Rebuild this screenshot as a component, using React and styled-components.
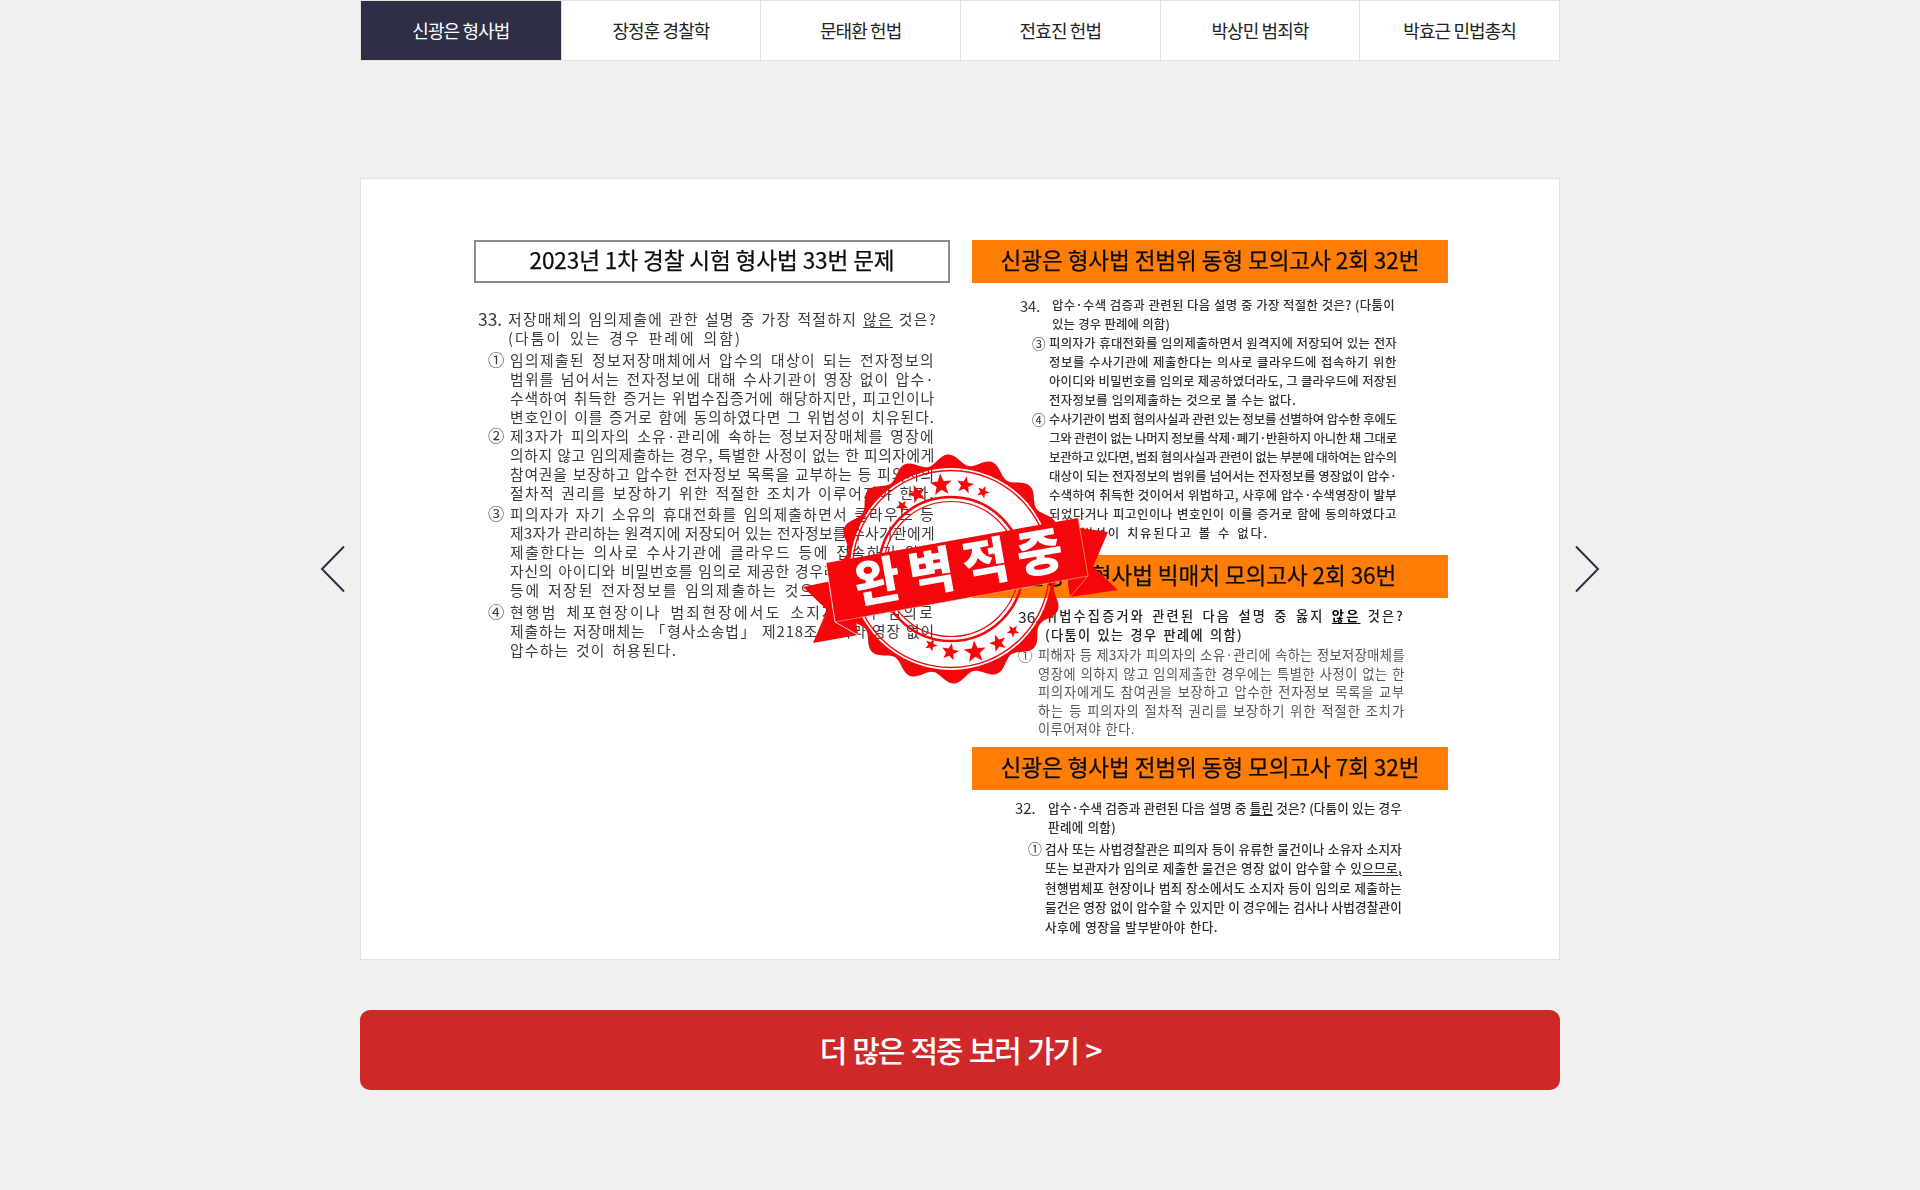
import React, { useLayoutEffect, useRef } from 'react';
import styled, { createGlobalStyle } from 'styled-components';

const KR = `'Noto Sans CJK KR', 'Noto Sans', sans-serif`;

const tabs = ['신광은 형사법', '장정훈 경찰학', '문태환 헌법', '전효진 헌법', '박상민 범죄학', '박효근 민법총칙'];

const U = styled.span`
  text-decoration: underline;
  text-underline-offset: 2px;
  font-weight: ${({ $bold }) => ($bold ? 700 : 'inherit')};
  color: ${({ $bold }) => ($bold ? '#000' : 'inherit')};
`;

const leftExam = {
  title: '2023년 1차 경찰 시험 형사법 33번 문제',
  outlined: true,
  size: 14.8,
  questionWeight: 400,
  line: 19,
  top: 25.5,
  color: '#3a3a3a',
  q: { left: 4, right: 13, numW: 30 },
  item: { left: 14, right: 15, markW: 22 },
  num: '33.',
  question: [
    <>저장매체의 임의제출에 관한 설명 중 가장 적절하지 <U>않은</U> 것은?</>,
    '(다툼이 있는 경우 판례에 의함)',
  ],
  questionEnd: 234,
  items: [
    {
      mark: '①',
      top: 3,
      lines: [
        '임의제출된 정보저장매체에서 압수의 대상이 되는 전자정보의',
        '범위를 넘어서는 전자정보에 대해 수사기관이 영장 없이 압수·',
        '수색하여 취득한 증거는 위법수집증거에 해당하지만, 피고인이나',
        '변호인이 이를 증거로 함에 동의하였다면 그 위법성이 치유된다.',
      ],
    },
    {
      mark: '②',
      top: 0.5,
      lines: [
        '제3자가 피의자의 소유·관리에 속하는 정보저장매체를 영장에',
        '의하지 않고 임의제출하는 경우, 특별한 사정이 없는 한 피의자에게',
        '참여권을 보장하고 압수한 전자정보 목록을 교부하는 등 피의자의',
        '절차적 권리를 보장하기 위한 적절한 조치가 이루어져야 한다.',
      ],
    },
    {
      mark: '③',
      top: 1.5,
      lines: [
        '피의자가 자기 소유의 휴대전화를 임의제출하면서 클라우드 등',
        '제3자가 관리하는 원격지에 저장되어 있는 전자정보를 수사기관에게',
        '제출한다는 의사로 수사기관에 클라우드 등에 접속하기 위한',
        '자신의 아이디와 비밀번호를 임의로 제공한 경우라도 그 클라우드',
        '등에 저장된 전자정보를 임의제출하는 것으로 볼 수는 없다.',
      ],
    },
    {
      mark: '④',
      top: 3,
      end: 167,
      lines: [
        '현행범 체포현장이나 범죄현장에서도 소지자 등이 임의로',
        '제출하는 저장매체는 「형사소송법」 제218조에 따라 영장 없이',
        '압수하는 것이 허용된다.',
      ],
    },
  ],
};

const rightExams = [
  {
    title: '신광은 형사법 전범위 동형 모의고사 2회 32번',
    size: 12.4,
    weight: 500,
    line: 19,
    top: 12.5,
    color: '#333',
    q: { left: 48, right: 53, numW: 32 },
    item: { left: 60, right: 51, markW: 17 },
    num: '34.',
    question: ['압수·수색 검증과 관련된 다음 설명 중 가장 적절한 것은? (다툼이', '있는 경우 판례에 의함)'],
    questionEnd: 118,
    items: [
      {
        mark: '③',
        end: 247,
        lines: [
          '피의자가 휴대전화를 임의제출하면서 원격지에 저장되어 있는 전자',
          '정보를 수사기관에 제출한다는 의사로 클라우드에 접속하기 위한',
          '아이디와 비밀번호를 임의로 제공하였더라도, 그 클라우드에 저장된',
          '전자정보를 임의제출하는 것으로 볼 수는 없다.',
        ],
      },
      {
        mark: '④',
        end: 220,
        lines: [
          '수사기관이 범죄 혐의사실과 관련 있는 정보를 선별하여 압수한 후에도',
          '그와 관련이 없는 나머지 정보를 삭제·폐기·반환하지 아니한 채 그대로',
          '보관하고 있다면, 범죄 혐의사실과 관련이 없는 부분에 대하여는 압수의',
          '대상이 되는 전자정보의 범위를 넘어서는 전자정보를 영장없이 압수·',
          '수색하여 취득한 것이어서 위법하고, 사후에 압수·수색영장이 발부',
          '되었다거나 피고인이나 변호인이 이를 증거로 함에 동의하였다고',
          '그 위법성이 치유된다고 볼 수 없다.',
        ],
      },
    ],
  },
  {
    title: '신광은 형사법 빅매치 모의고사 2회 36번',
    size: 13.2,
    questionWeight: 500,
    line: 18.5,
    top: 9,
    after: 12.5,
    color: '#555',
    questionColor: '#222',
    q: { left: 46, right: 43, numW: 27 },
    item: { left: 46, right: 43, markW: 20 },
    num: '36.',
    question: [
      <>위법수집증거와 관련된 다음 설명 중 옳지 <U $bold>않은</U> 것은?</>,
      '(다툼이 있는 경우 판례에 의함)',
    ],
    questionEnd: 198,
    items: [
      {
        mark: '①',
        top: 2,
        end: 97,
        lines: [
          '피해자 등 제3자가 피의자의 소유·관리에 속하는 정보저장매체를',
          '영장에 의하지 않고 임의제출한 경우에는 특별한 사정이 없는 한',
          '피의자에게도 참여권을 보장하고 압수한 전자정보 목록을 교부',
          '하는 등 피의자의 절차적 권리를 보장하기 위한 적절한 조치가',
          '이루어져야 한다.',
        ],
      },
    ],
  },
  {
    title: '신광은 형사법 전범위 동형 모의고사 7회 32번',
    size: 12.6,
    weight: 500,
    line: 19.5,
    top: 8,
    after: 8,
    color: '#2e2e2e',
    q: { left: 43, right: 46, numW: 33 },
    item: { left: 56, right: 46, markW: 17 },
    num: '32.',
    question: [<>압수·수색 검증과 관련된 다음 설명 중 <U>틀린</U> 것은? (다툼이 있는 경우</>, '판례에 의함)'],
    questionEnd: 68,
    items: [
      {
        mark: '①',
        top: 2,
        end: 173,
        lines: [
          '검사 또는 사법경찰관은 피의자 등이 유류한 물건이나 소유자 소지자',
          <>또는 보관자가 임의로 제출한 물건은 영장 없이 압수할 수 있<U>으므로,</U></>,
          '현행범체포 현장이나 범죄 장소에서도 소지자 등이 임의로 제출하는',
          '물건은 영장 없이 압수할 수 있지만 이 경우에는 검사나 사법경찰관이',
          '사후에 영장을 발부받아야 한다.',
        ],
      },
    ],
  },
];

const GlobalStyle = createGlobalStyle`
  body {
    margin: 0;
    background: #f0f0f0;
    font-family: ${KR};
  }
`;

const Page = styled.div`
  width: 1200px;
  margin: 0 auto;
  padding-bottom: 100px;
`;

const TabBar = styled.nav`
  display: grid;
  grid-template-columns: repeat(6, 1fr);
  height: 61px;
  box-sizing: border-box;
  background: #fff;
  border: 1px solid #e2e2e2;
`;

const Tab = styled.a`
  display: flex;
  align-items: center;
  justify-content: center;
  padding-bottom: 2px;
  font-size: 18px;
  letter-spacing: -0.9px;
  color: ${({ $active }) => ($active ? '#fff' : '#222')};
  background: ${({ $active }) => ($active ? '#2e2f45' : 'transparent')};
  & + & {
    border-left: 1px solid #e2e2e2;
  }
`;

const Carousel = styled.section`
  position: relative;
  margin-top: 117px;
`;

const Card = styled.div`
  position: relative;
  box-sizing: border-box;
  height: 782px;
  padding: 61px 0 0 113px;
  background: #fff;
  border: 1px solid #e2e2e2;
`;

const Sheet = styled.div`
  display: grid;
  grid-template-columns: 476px 476px;
  column-gap: 22px;
  filter: blur(0.35px);
`;

const Heading = styled.h3`
  display: flex;
  align-items: center;
  justify-content: center;
  box-sizing: border-box;
  height: 43px;
  margin: ${({ $after }) => $after || 0}px 0 0;
  padding-bottom: 4px;
  font-size: 22.6px;
  font-weight: 400;
  letter-spacing: -0.1px;
  color: #0c0c0c;
  -webkit-text-stroke: 0.25px #0c0c0c;
  background: ${({ $outlined }) => ($outlined ? '#fff' : '#ff7d05')};
  border: ${({ $outlined }) => ($outlined ? '2px solid #8b8b8b' : '0')};
`;

const Row = styled.div`
  display: grid;
  grid-template-columns: ${({ $w }) => $w}px minmax(0, 1fr);
  margin: ${({ $top }) => $top || 0}px ${({ $right }) => $right}px 0 ${({ $left }) => $left}px;
  font-size: ${({ $size }) => $size}px;
  font-weight: ${({ $weight }) => $weight || 400};
  line-height: ${({ $line }) => $line}px;
  color: ${({ $color }) => $color};
`;

const Num = styled.span`
  font-size: 1.18em;
  font-weight: 400;
`;

const Mark = styled.span`
  font-size: 1.1em;
  font-weight: 400;
`;

const LineBox = styled.div`
  width: ${({ $end }) => ($end ? `${$end}px` : 'auto')};
  height: ${({ $line }) => $line}px;
  white-space: nowrap;
  text-align: justify;
  text-align-last: justify;
`;

const ArrowBtn = styled.button`
  position: absolute;
  top: 367px;
  ${({ $side }) => $side}: -40px;
  width: 26px;
  height: 48px;
  padding: 0;
  border: 0;
  background: none;
`;

const Stamp = styled.svg`
  position: absolute;
  left: 434px;
  top: 266px;
  width: 330px;
  height: 255px;
`;

const MoreLink = styled.a`
  display: flex;
  align-items: center;
  justify-content: center;
  height: 80px;
  margin-top: 50px;
  padding-bottom: 2px;
  box-sizing: border-box;
  font-size: 30px;
  font-weight: 500;
  letter-spacing: -1.9px;
  word-spacing: 2px;
  color: #fff;
  background: #cf2828;
  border-radius: 10px;
`;

// the scan's lines fill their measure by spacing letters too, so most of the slack goes there
const Line = ({ children, end, line }) => {
  const box = useRef(null);
  const inner = useRef(null);
  useLayoutEffect(() => {
    const el = box.current;
    el.style.textAlignLast = 'left';
    const slack = el.clientWidth - inner.current.getBoundingClientRect().width;
    el.style.textAlignLast = '';
    const share = slack < 0 ? 1 : 0.8;
    el.style.letterSpacing = `${(slack * share) / el.textContent.length}px`;
  }, []);
  return (
    <LineBox ref={box} $end={end} $line={line}>
      <span ref={inner}>{children}</span>
    </LineBox>
  );
};

const Exam = ({ exam }) => (
  <>
    <Heading $outlined={exam.outlined} $after={exam.after}>
      {exam.title}
    </Heading>
    <Row
      $w={exam.q.numW}
      $left={exam.q.left}
      $right={exam.q.right}
      $top={exam.top}
      $size={exam.size}
      $weight={exam.questionWeight || exam.weight}
      $line={exam.line}
      $color={exam.questionColor || exam.color}
    >
      <Num>{exam.num}</Num>
      <div>
        {exam.question.map((text, i) => (
          <Line key={i} line={exam.line} end={i === exam.question.length - 1 ? exam.questionEnd : 0}>
            {text}
          </Line>
        ))}
      </div>
    </Row>
    {exam.items.map(item => (
      <Row
        key={item.mark}
        $w={exam.item.markW}
        $left={exam.item.left}
        $right={exam.item.right}
        $top={item.top}
        $size={exam.size}
        $weight={exam.weight}
        $line={exam.line}
        $color={exam.color}
      >
        <Mark>{item.mark}</Mark>
        <div>
          {item.lines.map((text, i) => (
            <Line key={i} line={exam.line} end={i === item.lines.length - 1 ? item.end : 0}>
              {text}
            </Line>
          ))}
        </div>
      </Row>
    ))}
  </>
);

const Arrow = ({ side }) => (
  <ArrowBtn $side={side} aria-label={side === 'left' ? '이전' : '다음'}>
    <svg width="26" height="48" viewBox="0 0 26 48">
      <path
        d={side === 'left' ? 'M24 1.5 L2 24 L24 46.5' : 'M2 1.5 L24 24 L2 46.5'}
        fill="none"
        stroke="#2e2f45"
        strokeWidth="2"
      />
    </svg>
  </ArrowBtn>
);

// scalloped seal outline with a round hole in the middle
const sealPath = () => {
  const cx = 951;
  const cy = 569;
  let d = '';
  for (let i = 0; i <= 360; i++) {
    const a = (i * Math.PI) / 180;
    const r = 109.5 + 5 * Math.cos(16 * a + 0.4);
    d += `${i ? 'L' : 'M'}${(cx + r * Math.cos(a)).toFixed(1)} ${(cy + r * Math.sin(a)).toFixed(1)}`;
  }
  d += `Z M${cx - 101} ${cy} a101 101 0 1 0 202 0 a101 101 0 1 0 -202 0 Z`;
  return d;
};

const starPoints = (cx, cy, r, rot = 0) => {
  const pts = [];
  for (let i = 0; i < 10; i++) {
    const a = ((-90 + rot + i * 36) * Math.PI) / 180;
    const rad = i % 2 ? r * 0.42 : r;
    pts.push(`${(cx + rad * Math.cos(a)).toFixed(1)},${(cy + rad * Math.sin(a)).toFixed(1)}`);
  }
  return pts.join(' ');
};

const stars = [
  [902, 506, 6.5, -35],
  [917, 494, 9.5, -20],
  [941, 485, 11.5, -5],
  [965, 485, 9, 12],
  [983, 492, 6.5, 25],
  [931, 645, 6.5, 25],
  [950, 652, 9, 12],
  [975, 652, 11.5, -5],
  [998, 643, 9, -20],
  [1013, 631, 6.5, -35],
];

const StampArt = () => (
  <Stamp viewBox="795 445 330 255">
    <path d={sealPath()} fill="#f5060c" fillRule="evenodd" />
    <circle cx="951" cy="569" r="98.5" fill="none" stroke="#f5060c" strokeWidth="1.4" />
    <circle cx="951" cy="569" r="72" fill="none" stroke="#f5060c" strokeWidth="2.6" />
    <circle cx="951" cy="569" r="67.5" fill="none" stroke="#f5060c" strokeWidth="1.2" />
    {stars.map(([x, y, r, rot]) => (
      <polygon key={`${x}-${y}`} points={starPoints(x, y, r, rot)} fill="#f5060c" />
    ))}
    <polygon points="803,587 850,577 858,635 813,643 827,610" fill="#f5060c" />
    <polygon points="1060,525 1108,532 1093,567 1118,590 1070,597" fill="#f5060c" />
    <polygon points="826,563 1078,518 1088,576 835,622" fill="#f5060c" />
    <path d="M826 563 L835 622 L858 635" fill="none" stroke="#fff" strokeWidth="0.8" />
    <path d="M835 622 L1088 576" fill="none" stroke="#ffd9c0" strokeWidth="0.5" />
    <path d="M1078 518 L1088 576 L1070 597" fill="none" stroke="#ffa033" strokeWidth="0.8" />
    <g transform="rotate(-10 959 567)">
      <text
        x="963"
        y="585"
        textAnchor="middle"
        fontFamily={KR}
        fontSize="50"
        fontWeight="900"
        letterSpacing="9"
        fill="#fff"
      >
        완벽적중
      </text>
    </g>
  </Stamp>
);

export default function App() {
  return (
    <Page>
      <GlobalStyle />
      <TabBar>
        {tabs.map((name, i) => (
          <Tab key={name} $active={i === 0}>
            {name}
          </Tab>
        ))}
      </TabBar>
      <Carousel>
        <Arrow side="left" />
        <Card>
          <Sheet>
            <div>
              <Exam exam={leftExam} />
            </div>
            <div>
              {rightExams.map(exam => (
                <Exam key={exam.title} exam={exam} />
              ))}
            </div>
          </Sheet>
          <StampArt />
        </Card>
        <Arrow side="right" />
      </Carousel>
      <MoreLink>더 많은 적중 보러 가기 &gt;</MoreLink>
    </Page>
  );
}
